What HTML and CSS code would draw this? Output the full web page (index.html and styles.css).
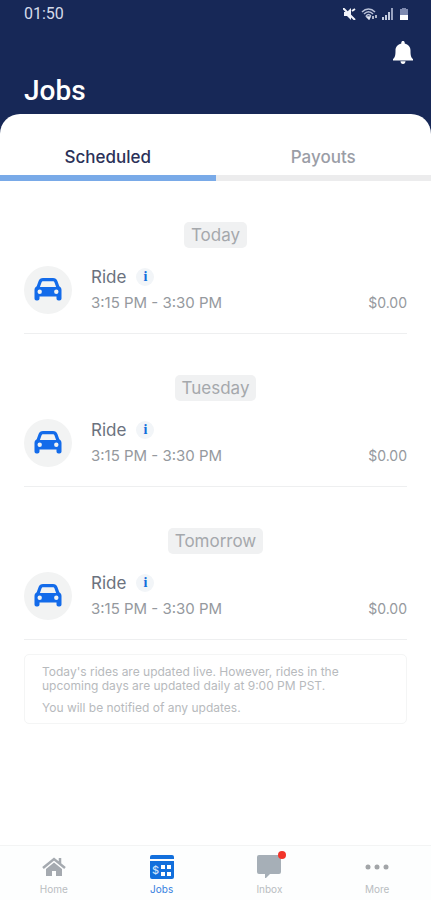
FILE: index.html
```html
<!DOCTYPE html>
<html lang="en">
<head>
<meta charset="utf-8">
<meta name="viewport" content="width=device-width, initial-scale=1">
<title>Jobs</title>
<link rel="stylesheet" href="styles.css">
</head>
<body>
<svg class="defs" aria-hidden="true">
  <symbol id="car" viewBox="0 0 28 24">
    <path fill-rule="evenodd" d="M9 0h10c2.200 0 3.700 1.100 4.400 3l1.900 5.300c1.400.7 2.200 2.100 2.200 3.800V20.500c0 1.200-.8 2-2 2h-1c-1.200 0-2-.8-2-2v-2h-17v2c0 1.200-.8 2-2 2h-1c-1.200 0-2-.8-2-2v-8.400c0-1.700.8-3.100 2.200-3.800L4.600 3C5.300 1.100 6.800 0 9 0zM9.200 3.200c-.9 0-1.400.4-1.700 1.200L5.900 9h16.200l-1.600-4.600c-.3-.8-.8-1.200-1.700-1.200zM5.700 11.500a2.200 2.200 0 1 0 0 4.400 2.200 2.200 0 0 0 0-4.400zm16.600 0a2.200 2.200 0 1 0 0 4.400 2.200 2.200 0 0 0 0-4.400z"/>
  </symbol>
</svg>
<div class="app">
  <header class="header">
    <div class="status">
      <span>01:50</span>
      <span class="status-icons">
        <svg width="13" height="12" viewBox="0 0 13 12" aria-hidden="true"><path d="M1 4h3l4-4v12L4 8H1z" fill="#f2f4fa"/><path d="M0 0l12 12M9 3l3-2" stroke="#f2f4fa" stroke-width="2"/></svg>
        <svg width="16" height="12" viewBox="0 0 16 12" fill="none" aria-hidden="true"><path d="M1 4c4-4 9-4 13 0M3 6c3-3 6-3 9 0M5 8c2-2 3-2 5 0" stroke="#b9c1d8" stroke-width="1.500"/><path d="M6 9h3l-1 2zM12 11V8M15 10V7" stroke="#dfe4f0" stroke-width="1.500"/></svg>
        <svg width="12" height="12" viewBox="0 0 12 12" aria-hidden="true"><path d="M0 9h2v3H0zM3 7h2v5H3zM6 4h2v8H6z" fill="#c4ccdf"/><path d="M9 0h2v12H9z" fill="#98a2c0"/></svg>
        <svg width="10" height="12" viewBox="0 0 10 12" aria-hidden="true"><path d="M3 0h4v1h2v6H1V1h2z" fill="#7f8bb0"/><path d="M1 7h8v5H1z" fill="#fff"/></svg>
      </span>
    </div>
    <button class="bell" type="button" aria-label="Notifications">
      <svg width="20" height="24" viewBox="0 0 20 24" fill="#fff" aria-hidden="true"><path d="M10 0c1 0 1.700.7 1.700 1.700v.7c3.600.8 5.800 3.500 5.800 7 0 5 .5 7 2.500 8.700v1.400H0v-1.400c2-1.700 2.500-3.700 2.500-8.700 0-3.500 2.200-6.200 5.800-7v-.7C8.300.7 9 0 10 0zM7.500 20.300h5c0 1.600-1 2.700-2.500 2.700s-2.500-1.100-2.500-2.700z"/></svg>
    </button>
    <h1>Jobs</h1>
  </header>
  <main class="panel">
    <div class="tabs" role="tablist">
      <button class="tab active" type="button" role="tab" aria-selected="true">Scheduled</button>
      <button class="tab" type="button" role="tab" aria-selected="false">Payouts</button>
    </div>
    <div class="content">
      <section class="day">
        <h2>Today</h2>
        <div class="ride">
          <span class="avatar"><svg width="28" height="24"><use href="#car"/></svg></span>
          <div class="details">
            <div class="name">Ride <button class="info" type="button" aria-label="Ride information">i</button></div>
            <div class="time">3:15 PM - 3:30 PM</div>
          </div>
          <span class="price">$0.00</span>
        </div>
      </section>
      <section class="day">
        <h2>Tuesday</h2>
        <div class="ride">
          <span class="avatar"><svg width="28" height="24"><use href="#car"/></svg></span>
          <div class="details">
            <div class="name">Ride <button class="info" type="button" aria-label="Ride information">i</button></div>
            <div class="time">3:15 PM - 3:30 PM</div>
          </div>
          <span class="price">$0.00</span>
        </div>
      </section>
      <section class="day">
        <h2>Tomorrow</h2>
        <div class="ride">
          <span class="avatar"><svg width="28" height="24"><use href="#car"/></svg></span>
          <div class="details">
            <div class="name">Ride <button class="info" type="button" aria-label="Ride information">i</button></div>
            <div class="time">3:15 PM - 3:30 PM</div>
          </div>
          <span class="price">$0.00</span>
        </div>
      </section>
      <aside class="note">
        <p>Today's rides are updated live. However, rides in the<br>upcoming days are updated daily at 9:00 PM PST.</p>
        <p>You will be notified of any updates.</p>
      </aside>
    </div>
  </main>
  <nav class="nav">
    <a href="#home">
      <svg width="26" height="26" viewBox="0 0 26 26" aria-hidden="true"><path d="M2 14 13 5l11 9M19 4v6" fill="none" stroke="#a5aab0" stroke-width="2.500"/><path d="M13 8.500 21 15v7h-6v-5h-4v5H5v-7z" fill="#a5aab0"/></svg>
      <span>Home</span>
    </a>
    <a class="current" href="#jobs" aria-current="page">
      <svg width="26" height="26" viewBox="0 0 26 26" aria-hidden="true"><path d="M3 1h20a2 2 0 0 1 2 2v2H1V3a2 2 0 0 1 2-2zM1 7h24v16a2 2 0 0 1-2 2H3a2 2 0 0 1-2-2z" fill="#126fdc"/><path d="M12 11h4v4h-4zM18 11h4v4h-4zM12 18h4v4h-4zM18 18h4v4h-4z" fill="#fff"/><text class="dollar" x="3" y="20">$</text></svg>
      <span>Jobs</span>
    </a>
    <a href="#inbox">
      <span class="inbox-icon"><svg width="26" height="26" viewBox="0 0 26 26" aria-hidden="true"><path d="M3 1h20a2 2 0 0 1 2 2v15a2 2 0 0 1-2 2h-9l-4 4H9v-4H3a2 2 0 0 1-2-2V3a2 2 0 0 1 2-2z" fill="#a6afb7"/></svg><i class="badge"></i></span>
      <span>Inbox</span>
    </a>
    <a href="#more">
      <svg width="26" height="26" viewBox="0 0 26 26" fill="#a2a5a8" aria-hidden="true"><circle cx="4" cy="13" r="2.500"/><circle cx="13" cy="13" r="2.500"/><circle cx="22" cy="13" r="2.500"/></svg>
      <span>More</span>
    </a>
  </nav>
</div>
</body>
</html>
```
FILE: styles.css
```css
* { box-sizing: border-box; }
body {
  margin: 0;
  background: #fff;
  font-family: Inter, "Liberation Sans", sans-serif;
}
button {
  padding: 0;
  border: 0;
  background: none;
  font: inherit;
  color: inherit;
}
h1, h2, p { margin: 0; }
.defs { position: absolute; width: 0; height: 0; }
.app {
  min-height: 100vh;
  display: flex;
  flex-direction: column;
}
.header {
  display: flex;
  flex-direction: column;
  padding: 4px 18px 33px 24px;
  background: #172857;
  color: #fff;
}
.status {
  display: flex;
  justify-content: space-between;
  align-items: center;
  height: 20px;
  padding-right: 4px;
  font: 400 16px/20px Roboto, sans-serif;
  color: #d5dbea;
}
.status-icons {
  display: flex;
  align-items: center;
  gap: 5px;
}
.bell {
  align-self: flex-end;
  height: 24px;
  margin-top: 17px;
}
.bell svg, .nav svg { display: block; }
h1 {
  font: 500 28px/32px Roboto, sans-serif;
  margin-top: 10px;
}
.panel {
  flex: 1;
  margin-top: -26px;
  background: #fff;
  border-radius: 20px 20px 0 0;
}
.tabs {
  display: grid;
  grid-template-columns: 1fr 1fr;
}
.tab {
  padding: 33px 0 7px;
  border-bottom: 6px solid #ececed;
  font-size: 17px;
  line-height: 21px;
  font-weight: 500;
  color: #9a9da6;
}
.tab.active {
  border-color: #79aae8;
  color: #2b3158;
}
.content { padding: 0 24px; }
.day {
  display: flex;
  flex-direction: column;
  align-items: center;
  padding-top: 41px;
}
h2 {
  padding: 0 7px;
  border-radius: 5px;
  background: #f0f1f2;
  font-size: 17px;
  line-height: 26px;
  font-weight: 400;
  color: #a5a8ac;
}
.ride {
  align-self: stretch;
  display: flex;
  align-items: center;
  gap: 19px;
  margin-top: 18px;
  padding-bottom: 19px;
  border-bottom: 1px solid #eeeff0;
}
.avatar {
  display: grid;
  place-items: center;
  width: 48px;
  height: 48px;
  border-radius: 50%;
  background: #f2f3f3;
}
.avatar svg { fill: #136bea; }
.details {
  flex: 1;
  padding-bottom: 2px;
}
.name {
  display: flex;
  align-items: center;
  gap: 10px;
  font-size: 17px;
  line-height: 22px;
  color: #6b727e;
}
.info {
  width: 18px;
  height: 18px;
  border-radius: 50%;
  background: #f2f5f8;
  font: bold 14px/18px "Liberation Serif", serif;
  color: #126fdc;
}
.time, .price {
  line-height: 18px;
  color: #95999e;
}
.time {
  margin-top: 6px;
  font-size: 15px;
}
.price {
  align-self: flex-end;
  margin-bottom: 2px;
  font-size: 14px;
}
.note {
  display: grid;
  gap: 8px;
  margin: 14px 0 20px;
  padding: 10px 17px 8px;
  border: 1px solid #f4f5f5;
  border-radius: 5px;
  font-size: 12px;
  line-height: 14px;
  color: #b7babd;
}
.nav {
  position: sticky;
  bottom: 0;
  display: grid;
  grid-template-columns: repeat(4, 1fr);
  padding: 8px 0 5px;
  border-top: 1px solid #f3f4f4;
  background: #fdfefe;
}
.nav a {
  display: flex;
  flex-direction: column;
  align-items: center;
  gap: 3px;
  font-size: 10px;
  line-height: 12px;
  color: #b9bdc1;
  text-decoration: none;
}
.nav a.current { color: #3681de; }
.dollar {
  fill: #cfe2f9;
  font-size: 11px;
  font-weight: 500;
}
.inbox-icon { position: relative; }
.badge {
  position: absolute;
  top: -3px;
  right: -4px;
  width: 8px;
  height: 8px;
  border-radius: 50%;
  background: #f2342a;
}
```
